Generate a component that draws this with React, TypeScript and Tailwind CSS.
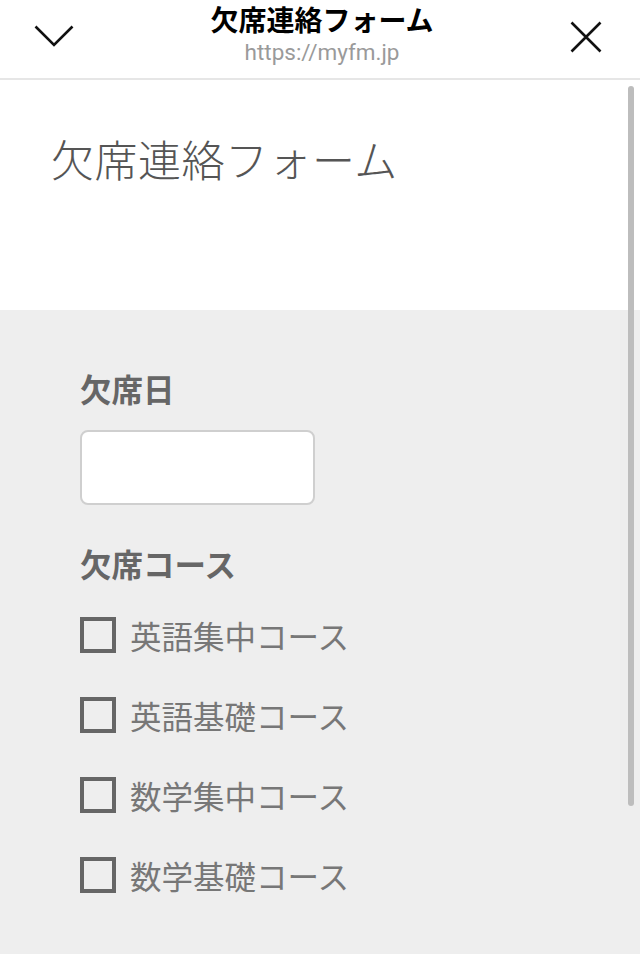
import React from "react";

const items = ["英語集中コース", "英語基礎コース", "数学集中コース", "数学基礎コース"];

export default function App() {
  const jp = { fontFamily: '"Noto Sans CJK JP", "Noto Sans", sans-serif' };
  return (
    <div className="relative w-[640px] h-[954px] overflow-hidden bg-white" style={jp}>
      <header className="h-[80px] border-b-2 border-[#e6e6e6] flex items-start justify-between px-[34px]">
        <svg width="40" height="22" viewBox="0 0 40 22" className="mt-[25px]" fill="none">
          <path d="M1.5 1.5 L20 20 L38.5 1.5" stroke="#111" strokeWidth="2.6" />
        </svg>
        <div className="flex flex-col items-center pt-[1px]">
          <div className="text-[28px] leading-[36px] font-bold text-black">欠席連絡フォーム</div>
          <div
            className="text-[22.5px] leading-[26px] text-[#9a9a9a] mt-[2px]"
            style={{ fontFamily: 'Roboto, "Noto Sans", sans-serif' }}
          >
            https://myfm.jp
          </div>
        </div>
        <svg width="32" height="32" viewBox="0 0 32 32" className="mt-[21px] mr-[4px]" fill="none">
          <path d="M1.5 1.5 L30.5 30.5 M30.5 1.5 L1.5 30.5" stroke="#111" strokeWidth="2.6" />
        </svg>
      </header>

      <section className="h-[230px] bg-white pl-[51px] pt-[50px]">
        <h1 className="text-[43px] leading-[56px] font-light text-[#555] tracking-[0.5px]">欠席連絡フォーム</h1>
      </section>

      <section className="bg-[#eeeeee] h-[644px] pl-[80px] pt-[61px]">
        <div className="text-[31.5px] leading-[34px] font-bold text-[#666]">欠席日</div>
        <div className="mt-[25px] w-[235px] h-[75px] bg-white border-2 border-[#cfcfcf] rounded-[8px]" />
        <div className="mt-[41px] text-[31.5px] leading-[34px] font-bold text-[#666]">欠席コース</div>
        <div className="mt-[37px] flex flex-col gap-[44px]">
          {items.map((t) => (
            <div key={t} className="flex items-center h-[36px]">
              <div className="w-[36px] h-[36px] border-[4px] border-[#666] shrink-0" />
              <span className="ml-[14px] text-[31.5px] leading-[36px] text-[#777]">{t}</span>
            </div>
          ))}
        </div>
      </section>

      <div className="absolute left-[628px] top-[86px] w-[6px] h-[720px] rounded-full bg-[#bdbdbd]" />
    </div>
  );
}
